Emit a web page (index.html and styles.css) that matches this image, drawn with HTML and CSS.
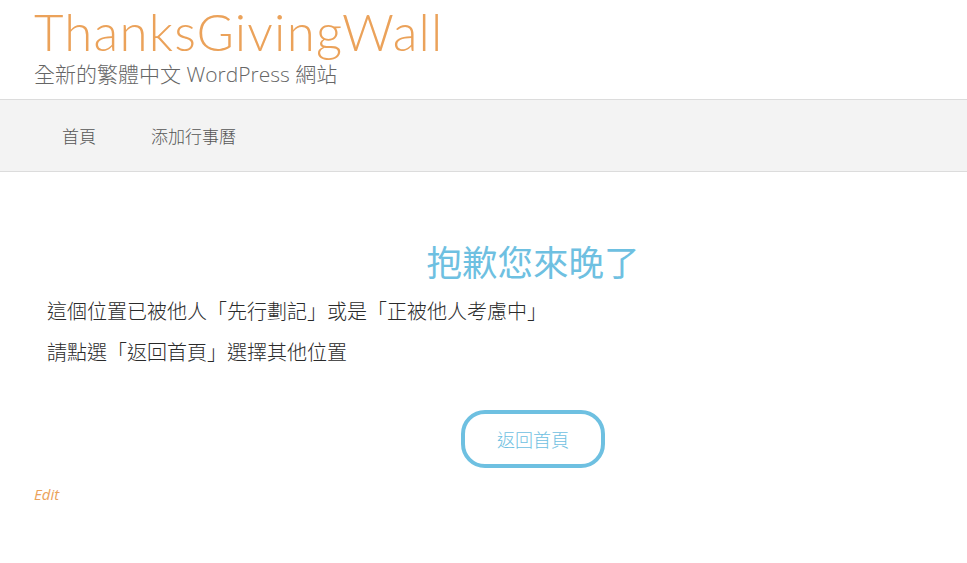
FILE: index.html
```html
<!DOCTYPE html>
<html lang="zh-Hant">
<head>
<meta charset="utf-8">
<title>ThanksGivingWall</title>
<link rel="stylesheet" href="styles.css">
</head>
<body>
<header class="site-header">
  <div class="site-title">ThanksGivingWall</div>
  <div class="site-desc">全新的繁體中文 WordPress 網站</div>
</header>
<nav class="main-nav">
  <a class="nav-item" href="#">首頁</a>
  <a class="nav-item" href="#">添加行事曆</a>
</nav>
<main class="content">
  <h1 class="sorry">抱歉您來晚了</h1>
  <p class="msg">這個位置已被他人<span class="br">「</span>先行劃記<span class="br">」</span>或是<span class="br">「</span>正被他人考慮中<span class="br">」</span></p>
  <p class="msg">請點選<span class="br">「</span>返回首頁<span class="br">」</span>選擇其他位置</p>
  <div class="btn-row"><a class="back-btn" href="#">返回首頁</a></div>
  <a class="edit" href="#">Edit</a>
</main>
</body>
</html>
```
FILE: styles.css
```css
html, body {
  margin: 0;
  padding: 0;
  background: #fff;
}
body {
  font-family: "Open Sans", "Noto Sans CJK TC", sans-serif;
  color: #333;
  width: 967px;
  overflow: hidden;
}
.site-header {
  padding: 0 0 0 34px;
  height: 99px;
  border-bottom: 1px solid #dcdcdc;
}
.site-title {
  font-family: "Lato", sans-serif;
  font-weight: 300;
  font-size: 51px;
  line-height: 64px;
  color: #eba25a;
  letter-spacing: 1.2px;
}
.site-desc {
  font-family: "Open Sans", "Noto Sans CJK TC", sans-serif;
  font-size: 21px;
  line-height: 20px;
  font-weight: 300;
  color: #666;
}
.main-nav {
  display: flex;
  height: 71px;
  align-items: center;
  background: #f3f3f3;
  border-bottom: 1px solid #dcdcdc;
  padding-left: 62px;
  gap: 55px;
}
.nav-item {
  font-family: "Noto Sans CJK TC", sans-serif;
  font-size: 17px;
  color: #555;
  text-decoration: none;
  font-weight: 300;
}
.content {
  padding: 64px 0 0 34px;
}
.sorry {
  margin: 0 0 4px 0;
  padding-left: 65px;
  text-align: center;
  font-family: "Noto Sans CJK TC", serif;
  font-weight: 400;
  font-size: 35.5px;
  line-height: 50px;
  color: #6ec0e1;
}
.msg {
  margin: 0 0 0 13px;
  font-family: "Noto Sans CJK TC", sans-serif;
  font-size: 20px;
  line-height: 41px;
  font-weight: 300;
  color: #2a2a2a;
}
.br {
  color: inherit;
}
.btn-row {
  display: flex;
  justify-content: center;
  padding-left: 65px;
  margin-top: 38px;
}
.back-btn {
  display: flex;
  align-items: center;
  justify-content: center;
  width: 144px;
  height: 58px;
  box-sizing: border-box;
  border: 4px solid #6ec0e1;
  border-radius: 24px;
  font-family: "Noto Sans CJK TC", sans-serif;
  font-size: 18px;
  font-weight: 300;
  color: #6ec0e1;
  text-decoration: none;
}
.edit {
  display: block;
  margin-top: 16px;
  font-family: "Open Sans", sans-serif;
  font-style: italic;
  font-size: 15px;
  color: #eba25a;
  text-decoration: none;
}
```
